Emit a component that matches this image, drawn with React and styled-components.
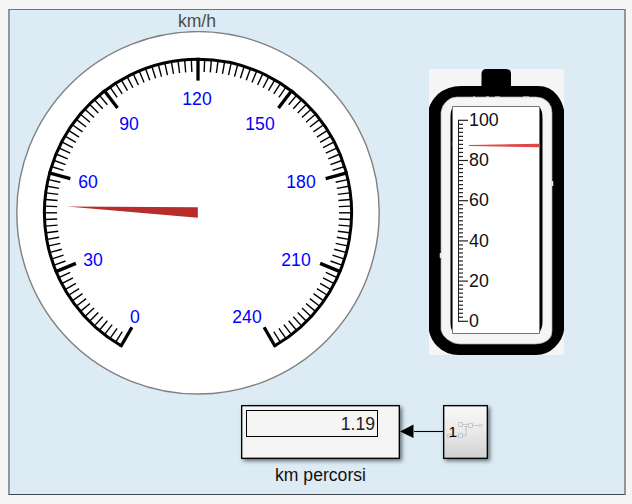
import React from "react";
import styled, { createGlobalStyle } from "styled-components";

const GlobalStyle = createGlobalStyle`
  * { box-sizing: border-box; }
  body { margin: 0; background: #f5f5f5; font-family: "Liberation Sans", Arial, sans-serif; }
`;

const Page = styled.main`
  width: 632px;
  height: 504px;
  padding: 9px 6px 9px 8px;
`;

const Panel = styled.section`
  height: 486px;
  background: #ddebf4;
  border: solid;
  border-width: 1px 2px;
  border-color: #707478 #90989e #40464a #90989e;
  overflow: hidden;
`;

const Instruments = styled.div`
  display: flex;
  align-items: flex-start;
  height: 386px;
`;

const DialColumn = styled.div`
  width: 376px;
  padding-left: 6px;
`;

const DialTitle = styled.h1`
  margin: 0;
  width: 362px;
  height: 21px;
  padding-top: 1px;
  font-size: 17.6px;
  line-height: 20px;
  font-weight: 400;
  text-align: center;
  color: #4d4d4d;
`;

const DialSvg = styled.svg`
  display: block;
  text {
    font: 17.6px "Liberation Sans", Arial, sans-serif;
    fill: #00f;
    text-anchor: middle;
  }
`;

const BatterySvg = styled.svg`
  display: block;
  margin: 59px 0 0 43px;
  text { font: 17.8px "Liberation Sans", Arial, sans-serif; fill: #111; }
`;

const Signals = styled.div`
  display: flex;
  align-items: flex-start;
  padding: 8px 0 0 231px;
`;

const DisplayColumn = styled.div`
  width: 159px;
`;

const Block = styled.div`
  height: 54px;
  margin-top: 1px;
  border: 1px solid #000;
  box-shadow: 2px 2px 4px rgba(30, 40, 50, 0.65), inset 0 0 0 0.5px #444;
`;

const DisplayBlock = styled(Block)`
  padding: 4px 0 0 4px;
  background: #f5f5f5;
`;

const Readout = styled.output`
  display: block;
  width: 132px;
  height: 27px;
  border: 1px solid #000;
  padding-right: 2px;
  font-size: 17.6px;
  line-height: 27px;
  text-align: right;
  color: #222;
`;

const Caption = styled.div`
  width: 159px;
  padding-top: 6px;
  font-size: 17.6px;
  line-height: 20px;
  text-align: center;
  color: #111;
`;

const ArrowSvg = styled.svg`
  display: block;
  margin-top: 19px;
`;

const SourceBlock = styled(Block)`
  width: 45px;
  background: linear-gradient(#f6f6f6 10%, #e9e9e9 50%, #d0d0d0);
`;

const SourceSvg = styled.svg`
  display: block;
  text { font: 15.5px "Liberation Sans", Arial, sans-serif; fill: #000; }
`;

const CX = 182;
const CY = 181.8;
const point = (deg, r) => {
  const a = (deg * Math.PI) / 180;
  return [CX + r * Math.sin(a), CY - r * Math.cos(a)];
};

const dialLabels = [
  [0, 119, 292], [30, 77, 235], [60, 72, 157], [90, 113, 99], [120, 181, 74],
  [150, 244, 99], [180, 285, 157], [210, 280, 235], [240, 231, 292],
];

function Dial() {
  const [sx, sy] = point(-150, 153.6);
  const [ex, ey] = point(150, 153.6);
  return (
    <DialSvg width="364" height="365" viewBox="0 0 364 365">
      <circle cx={CX} cy={CY} r="181.2" fill="#fff" stroke="#808080" strokeWidth="1.4" />
      {Array.from({ length: 121 }, (_, i) => {
        const major = i % 15 === 0;
        const deg = -150 + i * 2.5;
        const [x1, y1] = point(deg, major ? 132.2 : 141);
        const [x2, y2] = point(deg, major ? 155 : 153);
        return <line key={i} x1={x1} y1={y1} x2={x2} y2={y2} stroke="#000" strokeWidth={major ? 3.3 : 1.4} />;
      })}
      <path d={`M${sx} ${sy}A153.6 153.6 0 1 1 ${ex} ${ey}`} fill="none" stroke="#000" strokeWidth="3" />
      {dialLabels.map(([v, x, y]) => <text key={v} x={x} y={y}>{v}</text>)}
      <path d="M51 175.5L181.8 176.2V186.8Z" fill="#b62d2b" />
    </DialSvg>
  );
}

function Battery() {
  return (
    <BatterySvg width="135" height="286" viewBox="429 69 135 286">
      <path fill="#f5f5f5" d="M429 69h135v286H429z" />
      <path d="M481.5 87V74q0-5 5-5h19.5q5 0 5 5v13z" />
      <path d="M461 86h77q12 0 19 9 5 6 7 15v220q-1 9-9 17-8 8-19 8h-77q-13 0-22-9-6-6-8-15V108q2-7 9-14 10-8 23-8z" />
      <path fill="#f5f5f5" stroke="#aaa" strokeWidth=".7" d="M457 97h79q7 0 12 5 4 4 4 11v218q0 6-4 9-5 4-13 4h-75q-7 0-13-5-5-4-6-9V112q1-7 6-11 4-4 10-4z" />
      <path d="M473 97h2M486 97h3M495 97h5M523 97h6" stroke="#eee" />
      <path d="M440.5 253v5M552.5 181v5" stroke="#eee" strokeWidth="1.5" />
      <path d="M453 107q-2.5 3-2.5 10v206q0 6 2.5 9zM539.5 107q3 3 3 12v203q0 6-3 10z" />
      <path d="M542.5 198v22M542.5 281v26M451 142v4M450.5 268v9" stroke="#777" strokeWidth=".6" />
      <path fill="#fff" stroke="#737373" d="M452.5 106.5h87v227h-87z" />
      <path d="M458.5 120v201.5" stroke="#222" />
      {Array.from({ length: 51 }, (_, i) => {
        const y = 120.3 + i * 4.02;
        return <line key={i} x1="458" x2={i % 10 === 0 ? 468 : 463} y1={y} y2={y} stroke="#222" strokeWidth="1.2" />;
      })}
      {[100, 80, 60, 40, 20, 0].map((v, i) => <text key={v} x="469" y={126 + i * 40.2}>{v}</text>)}
      <path d="M469 145L539.5 143.7V147.2L469 146z" fill="#df4848" />
    </BatterySvg>
  );
}

function SourceContent() {
  return (
    <SourceSvg width="42" height="51" viewBox="0 0 42 51">
      <g fill="none" stroke="#c3c3c3" strokeWidth=".9">
        <path d="M14.5 16.5h4v4h-4zM24.5 17.5h4v4h-4zM14.5 27.5h4v4h-4zM3.5 28.5h4v3h-4zM18.5 18.5h6M28.5 19.5h6M8 29.5h6.5M18.5 29.5h3.5v-9" />
        <ellipse cx="36.5" cy="19.5" rx="2" ry="1.2" />
      </g>
      <path d="M21.5 20h1v1h-1z" fill="#777" />
      <text x="4.6" y="31">1</text>
    </SourceSvg>
  );
}

export default function App() {
  return (
    <>
      <GlobalStyle />
      <Page>
        <Panel>
          <Instruments>
            <DialColumn>
              <DialTitle>km/h</DialTitle>
              <Dial />
            </DialColumn>
            <Battery />
          </Instruments>
          <Signals>
            <DisplayColumn>
              <DisplayBlock><Readout>1.19</Readout></DisplayBlock>
              <Caption>km percorsi</Caption>
            </DisplayColumn>
            <ArrowSvg width="43" height="16" viewBox="0 0 43 16">
              <path d="M0 8.5L13.5 1.5v13.5z" />
              <path d="M14 8.5h29" stroke="#000" strokeWidth="1.1" />
            </ArrowSvg>
            <SourceBlock><SourceContent /></SourceBlock>
          </Signals>
        </Panel>
      </Page>
    </>
  );
}
